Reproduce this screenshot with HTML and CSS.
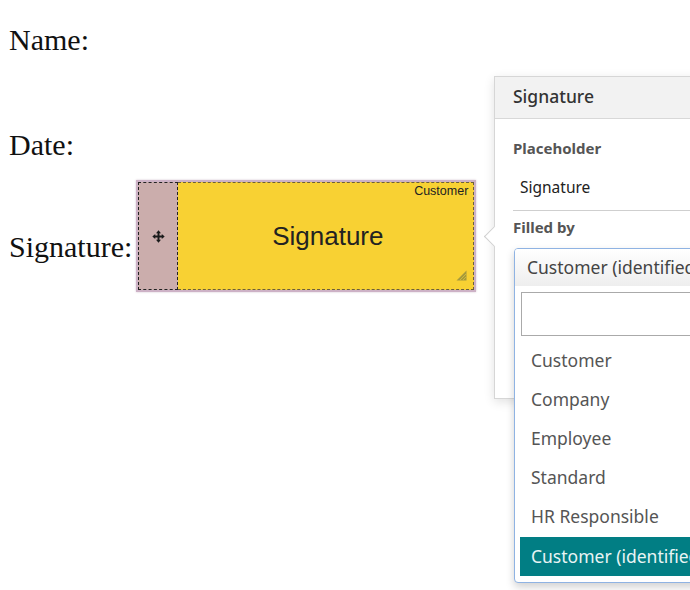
FILE: index.html
```html
<!DOCTYPE html>
<html>
<head>
<meta charset="utf-8">
<link rel="stylesheet" href="styles.css">
</head>
<body>
<div class="doc">
  <p class="line line-name">Name:</p>
  <p class="line line-date">Date:</p>
  <div class="sig-row">
    <span class="line sig-label">Signature:</span>
    <div class="sig-box">
      <div class="sig-handle">
        <svg width="13" height="13" viewBox="0 0 12 12"><path d="M6 0.3 L8.3 3 H6.9 V5.1 H9 V3.7 L11.7 6 L9 8.3 V6.9 H6.9 V9 H8.3 L6 11.7 L3.7 9 H5.1 V6.9 H3 V8.3 L0.3 6 L3 3.7 V5.1 H5.1 V3 H3.7 Z" fill="#1a1a1a"/></svg>
      </div>
      <div class="sig-main">
        <span class="sig-role">Customer</span>
        <span class="sig-text">Signature</span>
        <svg class="sig-resize" width="11" height="11" viewBox="0 0 11 11"><path d="M10.5 0.5 L10.5 10.5 L0.5 10.5 Z" fill="#a59a3c"/><path d="M4 10 L10 4 M7 10 L10 7" stroke="#d9c23a" stroke-width="0.8"/></svg>
      </div>
    </div>
  </div>
</div>

<div class="popover">
  <div class="pop-header">Signature</div>
  <div class="pop-body">
    <div class="pop-label">Placeholder</div>
    <div class="pop-input">Signature</div>
    <div class="pop-label pop-label-filled">Filled by</div>
  </div>
</div>

<div class="dropdown">
  <div class="dd-current">Customer (identified)</div>
  <div class="dd-search"></div>
  <ul class="dd-list">
    <li>Customer</li>
    <li>Company</li>
    <li>Employee</li>
    <li>Standard</li>
    <li>HR Responsible</li>
    <li class="dd-active">Customer (identified)</li>
  </ul>
</div>
</body>
</html>
```

FILE: styles.css
```css
html, body {
  margin: 0;
  padding: 0;
  background: #ffffff;
  overflow: hidden;
}

body {
  width: 690px;
  height: 590px;
  position: relative;
}

.doc {
  padding: 23px 0 0 9px;
  font-family: "Liberation Serif", "Times New Roman", serif;
  font-size: 30px;
  color: #111;
}

.line {
  margin: 0;
  line-height: 34px;
}

.line-date {
  margin-top: 71px;
}

.sig-row {
  display: flex;
  align-items: center;
  margin-top: 18px;
}

.sig-label {
  padding-top: 22px;
}

.sig-box {
  margin-left: 4px;
  width: 336px;
  height: 108px;
  border: 2px solid #cdb2c6;
  display: flex;
  box-shadow: 0 0 2px rgba(150, 110, 140, 0.4);
}

.sig-handle {
  width: 38px;
  background: #cbadac;
  border: 1px dashed #222;
  display: flex;
  align-items: center;
  justify-content: center;
}

.sig-main {
  flex: 1;
  position: relative;
  background: #f8d133;
  border: 1px dashed #6d5f3a;
  border-left: none;
  display: flex;
  align-items: center;
  justify-content: center;
  font-family: "Liberation Sans", Arial, sans-serif;
  color: #222;
}

.sig-text {
  font-size: 26px;
  padding-left: 4px;
}

.sig-role {
  position: absolute;
  top: 1px;
  right: 5px;
  font-size: 12.5px;
  color: #222;
}

.sig-resize {
  position: absolute;
  right: 6px;
  bottom: 8px;
}

.popover {
  position: absolute;
  left: 494px;
  top: 76px;
  width: 260px;
  height: 321px;
  background: #fff;
  border: 1px solid #d6d6d6;
  box-shadow: 0 3px 10px rgba(0, 0, 0, 0.12);
  font-family: "Noto Sans", "Open Sans", sans-serif;
  color: #4a4a4a;
}

.popover::before {
  content: "";
  position: absolute;
  left: -8px;
  top: 152px;
  width: 14px;
  height: 14px;
  background: #fff;
  border-left: 1px solid #cfcfcf;
  border-bottom: 1px solid #cfcfcf;
  transform: rotate(45deg);
}

.pop-header {
  height: 42px;
  background: #f2f2f2;
  border-bottom: 1px solid #d8d8d8;
  display: flex;
  align-items: center;
  padding: 0 0 3px 18px;
  box-sizing: border-box;
  font-size: 17.5px;
  font-weight: 500;
  color: #333;
}

.pop-body {
  padding: 18px 0 0 18px;
}

.pop-label {
  font-size: 15px;
  font-weight: 700;
  color: #555;
  line-height: 22px;
}

.pop-input {
  margin-top: 17px;
  padding: 0 0 12px 7px;
  font-size: 15.5px;
  color: #222;
  border-bottom: 1px solid #cfcfcf;
  line-height: 22px;
}

.pop-label-filled {
  margin-top: 5px;
}

.dropdown {
  position: absolute;
  left: 514px;
  top: 248px;
  width: 240px;
  height: 333px;
  background: #fff;
  border: 1px solid #8fb3e3;
  border-radius: 4px;
  box-shadow: 0 4px 8px rgba(0, 0, 0, 0.18);
  font-family: "Noto Sans", "Open Sans", sans-serif;
  color: #555;
  font-size: 17.5px;
  overflow: hidden;
}

.dd-current {
  height: 37px;
  line-height: 37px;
  padding-left: 12px;
  white-space: nowrap;
  background: linear-gradient(#ffffff, #eeeeee);
  color: #444;
}

.dd-search {
  margin: 6px 0 0 6px;
  height: 42px;
  border: 1px solid #aaaaaa;
}

.dd-list {
  list-style: none;
  margin: 5px 0 0 5px;
  padding: 0;
}

.dd-list li {
  height: 39px;
  line-height: 39px;
  padding-left: 11px;
  white-space: nowrap;
}

.dd-list li.dd-active {
  background: #017e84;
  color: #e8f4f4;
  margin-top: 1px;
}
```
